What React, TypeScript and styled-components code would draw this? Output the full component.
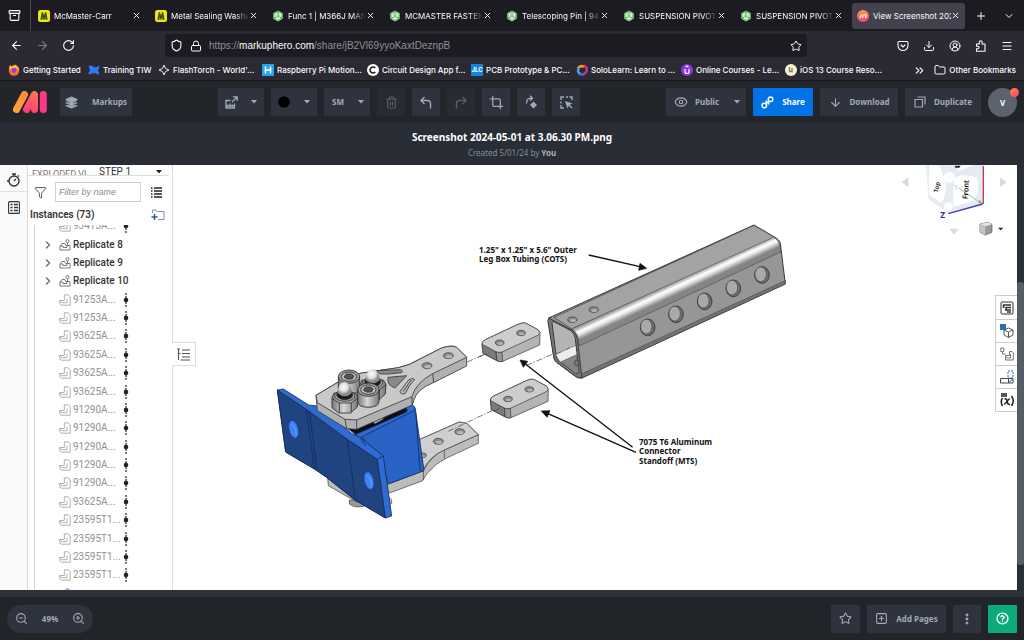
import React from "react";
import styled, { createGlobalStyle, css } from "styled-components";
import {
  ArrowLeft, ArrowRight, ArrowDown, RotateCw, Shield, Lock, Star, CircleUserRound, Menu,
  Folder, ChevronsRight, ChevronRight, ChevronDown, Plus, X, Layers, Trash2, Crop, Eye, ZoomIn, ZoomOut,
  SquarePlus, EllipsisVertical, CircleHelp, Funnel, Archive, Download,
} from "lucide-react";

const Global = createGlobalStyle`
  *, *::before, *::after { box-sizing: border-box; }
  body { margin: 0; background: #22262b; }
  button, input, select { font: inherit; color: inherit; margin: 0; padding: 0; border: 0; background: none; }
  button { cursor: pointer; }
  svg { flex: none; display: block; }
`;

const Page = styled.div`
  display: flex;
  flex-direction: column;
  height: 100vh;
  overflow: hidden;
  font-family: "Noto Sans", sans-serif;
`;

/* ---------- browser chrome ---------- */
const Chrome = styled.header`
  flex: none;
  font-family: Inter, sans-serif;
  color: #fbfbfe;
  background: #2b2a33;
`;
const TabBar = styled.div`
  display: flex;
  align-items: center;
  height: 31px;
  background: #1c1b22;
`;
const RecentButton = styled.button`
  display: grid;
  place-items: center;
  width: 31px;
  height: 31px;
  padding-right: 1px;
  border-right: 1px solid #4a4953;
  margin-right: 2px;
`;
const Tabs = styled.nav`
  display: flex;
  gap: 4px;
`;
const TabLabel = styled.button`
  display: flex;
  align-items: center;
  gap: 4px;
  flex: 1;
  min-width: 0;
  font-size: 8px;
  line-height: 12px;
  white-space: nowrap;
  overflow: hidden;
  text-align: left;
  mask-image: linear-gradient(to right, #000 80px, transparent 94px);
`;
const Tab = styled.div<{ $active?: boolean }>`
  display: flex;
  align-items: center;
  width: 113px;
  height: 26px;
  padding: 0 5px;
  border-radius: 3px;
  background: ${(p) => (p.$active ? "#42414d" : "transparent")};
  ${(p) => p.$active && css`${TabLabel} { mask-image: none; }`}
`;
const TabClose = styled.button`
  display: grid;
  place-items: center;
  width: 9px;
`;
const TabActions = styled.div`
  display: flex;
  justify-content: space-between;
  flex: 1;
  padding: 0 9px 0 10px;
`;
const NavRow = styled.div`
  display: flex;
  align-items: center;
  justify-content: space-between;
  height: 29px;
  padding: 0 11px 0 10px;
`;
const IconGroup = styled.div<{ $gap: number }>`
  display: flex;
  align-items: center;
  gap: ${(p) => p.$gap}px;
`;
const IconButton = styled.button<{ $dim?: boolean }>`
  display: grid;
  place-items: center;
  opacity: ${(p) => (p.$dim ? 0.4 : 1)};
`;
const AddressBar = styled.div`
  display: flex;
  align-items: center;
  gap: 7px;
  width: 64%;
  height: 23px;
  padding: 0 5px;
  border-radius: 3px;
  background: #1c1b22;
`;
const Url = styled.div`
  flex: 1;
  font-family: "Liberation Sans", sans-serif;
  font-size: 10px;
  line-height: 14px;
  color: #8f8e99;
  outline: none;
  b { font-weight: 400; color: #fbfbfe; }
`;
const Bookmarks = styled.nav`
  display: flex;
  align-items: center;
  height: 20px;
  padding: 0 8px;
  gap: 8px;
  font-size: 8px;
  font-weight: 500;
  line-height: 12px;
`;
const Bookmark = styled.a<{ $w?: number }>`
  display: flex;
  align-items: center;
  gap: 3px;
  width: ${(p) => (p.$w ? p.$w + "px" : "auto")};
  color: inherit;
  text-decoration: none;
  white-space: nowrap;
`;
const BookmarkEnd = styled.div`
  display: flex;
  align-items: center;
  gap: 8px;
  margin-left: auto;
`;

/* ---------- markup editor ---------- */
const Toolbar = styled.div`
  flex: none;
  display: flex;
  align-items: center;
  justify-content: space-between;
  height: 43px;
  padding: 0 7px 0 13px;
  border-top: 1px solid #17181d;
  background: #22262b;
  color: #a3a9b5;
`;
const Group = styled.div`
  display: flex;
  align-items: center;
  gap: 7px;
`;
const block = css<{ $w: number; $dim?: boolean }>`
  display: flex;
  align-items: center;
  justify-content: center;
  width: ${(p) => p.$w}px;
  height: 28px;
  border-radius: 1px;
  background: ${(p) => (p.$dim ? "#272b32" : "#2e333e")};
  font-size: 8px;
  font-weight: 700;
  line-height: 14px;
  white-space: nowrap;
`;
const ToolButton = styled.button<{ $w: number; $dim?: boolean; $tone?: "blue" | "green"; $gap?: number }>`
  ${block}
  gap: ${(p) => p.$gap ?? 8}px;
  color: ${(p) => (p.$tone ? "#fff" : p.$dim ? "#59606b" : "#a3a9b5")};
  ${(p) => p.$tone === "blue" && "background: #0073e6;"}
  ${(p) => p.$tone === "green" && "background: #0cab7c;"}
`;
const ToolSelect = styled.label<{ $w: number }>`
  ${block}
  gap: 7px;
  padding: 0 6px 0 8px;
  select { appearance: none; flex: 1; min-width: 0; outline: none; }
`;
const Logo = styled.a`
  margin-right: 6px;
`;
const Avatar = styled.button`
  position: relative;
  width: 29px;
  height: 29px;
  border-radius: 50%;
  background: #5d636c;
  color: #fff;
  font-size: 8px;
  font-weight: 700;
  &::after {
    content: "";
    position: absolute;
    top: 0;
    right: -2px;
    width: 9px;
    height: 9px;
    border-radius: 50%;
    background: linear-gradient(135deg, #ff8a3c, #ff3f7f);
  }
`;
const TitleBar = styled.div`
  flex: none;
  height: 42px;
  padding-top: 5px;
  background: #282d36;
  text-align: center;
`;
const Title = styled.h1`
  margin: 0;
  font-size: 10px;
  font-weight: 700;
  line-height: 18px;
  color: #fff;
`;
const Subtitle = styled.p`
  margin: 0;
  font-size: 8px;
  line-height: 13px;
  color: #858c98;
  b { color: #a9afba; }
`;
const Stage = styled.main`
  flex: 1;
  min-height: 0;
  display: flex;
  border-bottom: 7px solid #2c313c;
  background: #fff;
`;
const ScrollTrack = styled.div`
  width: 7px;
  padding: 117px 0 25px;
  background: #282d36;
`;
const ScrollThumb = styled.div`
  height: 100%;
  border-radius: 3px;
  background: #565d69;
`;
const Footer = styled.footer`
  flex: none;
  display: flex;
  align-items: center;
  justify-content: space-between;
  height: 43px;
  padding: 0 7px;
  background: #21252a;
  color: #a3a9b5;
`;
const ZoomPill = styled.div`
  display: flex;
  align-items: center;
  justify-content: space-between;
  width: 86px;
  height: 28px;
  padding: 0 8px;
  border-radius: 14px;
  background: #2e333e;
  font-size: 8px;
  font-weight: 700;
`;

/* ---------- CAD page ---------- */
const Rail = styled.div`
  flex: none;
  width: 28px;
  background: #fafafa;
  border-right: 1px solid #dcdcdc;
`;
const RailButton = styled.button`
  display: grid;
  place-items: center;
  width: 27px;
  height: 27px;
  padding-top: 3px;
  &:first-child { border-bottom: 1px solid #e2e2e2; }
`;
const Panel = styled.section`
  flex: none;
  display: flex;
  flex-direction: column;
  width: 145px;
  border-right: 1px solid #ddd;
  font-family: Roboto, sans-serif;
  font-size: 10px;
  line-height: 14px;
  color: #333;
`;
const PanelHead = styled.div`
  display: flex;
  align-items: flex-start;
  height: 11px;
  margin-right: 3px;
  padding: 0 7px 0 4px;
  border-bottom: 1px solid #ddd;
  overflow: hidden;
`;
const HeadName = styled.span`
  width: 60px;
  padding-top: 3px;
  font-size: 9px;
  line-height: 12px;
  color: #777;
`;
const StepSelect = styled.label`
  display: flex;
  align-items: center;
  flex: 1;
  padding-left: 7px;
  line-height: 12px;
  select { appearance: none; flex: 1; outline: none; height: 13px; }
`;
const FilterRow = styled.div`
  display: flex;
  align-items: center;
  gap: 8px;
  height: 32px;
  padding: 0 11px 0 6px;
  input {
    width: 86px;
    height: 20px;
    margin-right: 2px;
    padding-left: 3px;
    border: 1px solid #d0d0d0;
    outline: none;
    font: italic 9px/14px "Liberation Sans", sans-serif;
  }
  input::placeholder { color: #8c8c8c; }
`;
const Instances = styled.div`
  display: flex;
  justify-content: space-between;
  align-items: center;
  height: 14px;
  padding: 0 7px 0 2px;
  font-weight: 600;
`;
const TreeClip = styled.div`
  flex: 1;
  min-height: 0;
  display: flex;
  margin: 3px 0 0 6px;
  border-left: 1px solid #d4d4d4;
  overflow: hidden;
`;
const Tree = styled.ul`
  flex: 1;
  display: flex;
  flex-direction: column;
  margin: -8px 0 -13px;
  padding: 0;
  list-style: none;
`;
const TreeRow = styled.li<{ $group?: boolean }>`
  flex: 1;
  display: flex;
  align-items: center;
  padding-left: 7px;
  color: ${(p) => (p.$group ? "#333" : "#929292")};
  font-weight: ${(p) => (p.$group ? 500 : 400)};
`;
const Twist = styled.span`
  width: 17px;
`;
const RowName = styled.span`
  width: 50px;
  margin-left: 2px;
  white-space: nowrap;
`;
const Viewport = styled.section`
  position: relative;
  flex: 1;
  min-width: 0;
  display: flex;
`;
const Drawing = styled.svg`
  flex: 1;
  width: 100%;
  height: 100%;
  font-family: "Noto Sans", sans-serif;
`;
const TreeToggle = styled.button`
  position: absolute;
  left: -1px;
  top: 177px;
  display: grid;
  place-items: center;
  width: 24px;
  height: 24px;
  border: 1px solid #ddd;
  border-left: 0;
  background: #fff;
`;
const SideTools = styled.div`
  position: absolute;
  right: 0;
  top: 130px;
  border: 1px solid #ccc;
  border-right: 0;
  background: #fff;
`;
const SideTool = styled.button`
  display: grid;
  place-items: center;
  width: 21px;
  height: 23px;
  & + & { border-top: 1px solid #ccc; }
`;

const Caret = ({ dark }: { dark?: boolean }) => (
  <svg width="6" height="4" viewBox="0 0 6 4"><path d="M0 0h6L3 3.6z" fill={dark ? "#222" : "#a3a9b5"} /></svg>
);

type FavKind = "mc" | "gem" | "hero";
const Favicon = ({ kind }: { kind: FavKind }) => (
  <svg width="12" height="12" viewBox="0 0 12 12">
    {kind === "mc" && (<><rect width="12" height="12" rx="2.5" fill="#f5e211" /><path d="M2.4 9.8L3.700 2.200H5L6 5.500l1-3.300h1.300L9.600 9.800H7.500L7.200 6.800L6.600 9.800H5.400L4.800 6.800L4.500 9.800z" fill="#2d5a1c" /></>)}
    {kind === "gem" && (<><path d="M6 .4L10.800 3.200v5.600L6 11.600L1.200 8.800V3.200z" fill="#8ccf86" /><circle cx="6" cy="6" r="2.600" fill="none" stroke="#e9f8e6" strokeWidth="1.200" /><path d="M6 1v3M2 8.500l2.200-1.400M10 8.500L7.800 7.100" stroke="#4b9150" strokeWidth="1" /></>)}
    {kind === "hero" && (<><defs><linearGradient id="fh" x2="0" y2="1"><stop stopColor="#ff9a3d" /><stop offset="1" stopColor="#ff3b80" /></linearGradient></defs><circle cx="6" cy="6" r="6" fill="url(#fh)" /><path d="M3 7.500L5 4.500M5.500 7.500L7.200 4.500M8.800 4.500v3" stroke="#fff" strokeWidth="1.300" strokeLinecap="round" /></>)}
  </svg>
);

const tabs: { label: string; kind: FavKind }[] = [
  { label: "McMaster-Carr", kind: "mc" },
  { label: "Metal Sealing Washe", kind: "mc" },
  { label: "Func 1 | M366J MAN", kind: "gem" },
  { label: "MCMASTER FASTEN", kind: "gem" },
  { label: "Telescoping Pin | 94", kind: "gem" },
  { label: "SUSPENSION PIVOT", kind: "gem" },
  { label: "SUSPENSION PIVOT", kind: "gem" },
  { label: "View Screenshot 202", kind: "hero" },
];

const BookmarkIcon = ({ n }: { n: number }) => (
  <svg width="12" height="12" viewBox="0 0 12 12">
    {n === 0 && (<><circle cx="6" cy="6.500" r="5.200" fill="#ff7139" /><path d="M1 5c0-2 .6-3 1.200-4L4 3l3-2.500C10 2 11.500 4 11 7L8 3.500z" fill="#ffbd2e" /><circle cx="6" cy="6.500" r="2.400" fill="#8a3de0" /></>)}
    {n === 1 && <path d="M1 1.500l3 .2c3 2.200 5 2 7.500-.4L11 4.500C9.500 6 9.500 6.300 11 8v3c-3-2.300-6-2.500-10-.3L.5 8.500C2.500 6.500 2.500 6 1 4.500z" fill="#2f7bf0" />}
    {n === 2 && <path d="M6 1L7.500 4.500L11 6L7.500 7.500L6 11L4.500 7.500L1 6L4.500 4.500z" fill="none" stroke="#e8e8dd" strokeWidth="1" />}
    {n === 3 && (<><rect width="12" height="12" fill="#22a7e8" /><path d="M3.500 2.500v7M8.500 2.500v7M2.500 6.500l7-1" stroke="#fff" strokeWidth="1.400" /></>)}
    {n === 4 && (<><circle cx="6" cy="6" r="6" fill="#fff" /><path d="M8.300 4A3 3 0 1 0 8.300 8" fill="none" stroke="#222" strokeWidth="1.600" /></>)}
    {n === 5 && (<><rect width="12" height="12" fill="#1486e0" /><text x="6" y="8" fontSize="6" fontWeight="700" textAnchor="middle" fill="#fff">JLC</text></>)}
    {n === 6 && (<g fill="none" strokeWidth="2.600"><path d="M2 4.500C3 2 6 1.500 8 3" stroke="#f59a23" /><path d="M8 1.500C11 3 11.500 6 10 8" stroke="#d8325b" /><path d="M10 8C8 11 5 11 3.500 9.500" stroke="#7b4fd0" /><path d="M4 10C1.500 8.500 1.500 6 3 4" stroke="#3aa7e0" /></g>)}
    {n === 7 && (<><circle cx="6" cy="6" r="6" fill="#8c34dd" /><path d="M4 5v2.500a2 2 0 0 0 4 0V5M4.500 3L6 2l1.500 1" fill="none" stroke="#fff" strokeWidth="1.200" /></>)}
    {n === 8 && (<><circle cx="6" cy="6" r="6" fill="#f4f1e4" /><path d="M4.500 3v4.500H7V4" fill="none" stroke="#9b8b2a" strokeWidth="1.500" /></>)}
  </svg>
);
const bookmarks: [string, number][] = [
  ["Getting Started", 72], ["Training TIW", 62], ["FlashTorch - World'...", 96],
  ["Raspberry Pi Motion...", 97], ["Circuit Design App f...", 96], ["PCB Prototype & PC...", 97],
  ["SoloLearn: Learn to ...", 97], ["Online Courses - Le...", 96], ["iOS 13 Course Reso...", 96],
];

const PartIcon = () => (
  <svg width="12" height="12" viewBox="0 0 12 12" fill="none" stroke="#a6a6a6" strokeWidth=".9" strokeLinejoin="round"><path d="M5.300 .8H9l2.200 2v8.400H2.500Q.6 10.500.6 8.800V6.500h4.700zM.8 7q1 1.700 2.500 1.700H8V4.500" /></svg>
);
const GroupIcon = () => (
  <svg width="12" height="12" viewBox="0 0 12 12" fill="none" stroke="#6a6a6a" strokeWidth=".9" strokeLinejoin="round"><circle cx="8.500" cy="2.200" r="1.600" /><path d="M8.500 4v2.500M1 7L3 4.500h2.800l1 2H11V11H1zM1 7h3v1.500h4V6.500" /></svg>
);
const MateIcon = () => (
  <svg width="6" height="14" viewBox="0 0 6 14"><path d="M3 0V14" stroke="#222" strokeWidth="1.200" strokeDasharray="2 1" /><circle cx="3" cy="7" r="2.300" fill="#222" /></svg>
);

const parts = ["91253A...", "91253A...", "93625A...", "93625A...", "93625A...", "93625A...", "91290A...", "91290A...", "91290A...", "91290A...", "91290A...", "93625A...", "23595T1...", "23595T1...", "23595T1...", "23595T1..."];

const PartRow = ({ name }: { name: string }) => (
  <TreeRow><Twist /><PartIcon /><RowName>{name}</RowName><MateIcon /></TreeRow>
);
const GroupRow = ({ name }: { name: string }) => (
  <TreeRow $group><Twist><ChevronRight size={12} strokeWidth={2.5} color="#666" /></Twist><GroupIcon /><RowName>{name}</RowName></TreeRow>
);

const Hole = ({ x, y, rx = 15, ry = 9 }: { x: number; y: number; rx?: number; ry?: number }) => (
  <g><ellipse cx={x} cy={y} rx={rx} ry={ry} fill="#8a8a8a" stroke="#333" strokeWidth="2" /><ellipse cx={x + 2} cy={y + 3} rx={rx - 5} ry={ry - 4} fill="#b5b5b5" stroke="none" /></g>
);
const Standoff = ({ x, y }: { x: number; y: number }) => (
  <g transform={`translate(${x} ${y})`} stroke="#333" strokeWidth="2" strokeLinejoin="round">
    <path d="M0 62Q1 54 10 50L108 4Q120-2 130 0L168 20Q175 26 174 36L173 66L62 115Q52 118 45 113L3 91Z" fill="#b4b4b4" />
    <path d="M0 62L42 86L45 113L3 91Z" fill="#7b7b7b" />
    <path d="M42 86Q50 90 60 87L62 115Q52 118 45 113Z" fill="#969696" />
    <path d="M0 62Q1 54 10 50L108 4Q120-2 130 0L168 20Q178 30 170 36L60 87Q50 90 42 86L4 66Z" fill="#cdcdcd" />
    <Hole x={53} y={59} rx={13} ry={8} /><Hole x={117} y={30} rx={13} ry={8} />
  </g>
);
const SocketScrew = ({ x, y }: { x: number; y: number }) => (
  <g stroke="#2e2e2e" strokeWidth="2.500">
    <path d={`M${x - 32} ${y}v36q0 16 32 17q32-1 32-17v-36z`} fill="url(#metal)" />
    <ellipse cx={x} cy={y} rx="32" ry="20" fill="#9a9a9a" />
    <ellipse cx={x} cy={y} rx="23" ry="14" fill="#bdbdbd" />
    <path d={`M${x - 15} ${y + 1}l7-9h15l8 6l-6 9h-16z`} fill="#555" />
  </g>
);
const AcornNut = ({ x, y }: { x: number; y: number }) => (
  <g stroke="#2e2e2e" strokeWidth="2.500">
    <path d={`M${x - 38} ${y + 18}l6-14h64l8 12l-2 30l-20 18h-36l-20-16z`} fill="url(#metal)" />
    <path d={`M${x - 38} ${y + 20}l20 14h38l20-15M${x - 16} ${y + 34}v30M${x + 20} ${y + 34}v28`} fill="none" />
    <ellipse cx={x} cy={y + 12} rx="30" ry="17" fill="#aaa" />
    <ellipse cx={x} cy={y + 9} rx="24" ry="15" fill="#1c1c1c" />
    <path d={`M${x - 21} ${y + 5}q1-33 21-34q20 1 21 34q-20 18-42 0z`} fill="url(#ball)" stroke="none" />
  </g>
);

const Annotation = ({ x, y, lines }: { x: number; y: number; lines: string[] }) => (
  <text x={x} y={y} fontSize="8" fontWeight="700" fill="#111">
    {lines.map((l, i) => <tspan key={l} x={x} y={y + i * 9 + (i > 1 ? 1 : 0)}>{l}</tspan>)}
  </text>
);

const ExplodedView = () => (
  <Drawing viewBox="173 165 844 425" role="img" aria-label="Exploded view">
    <defs>
      <linearGradient id="metal"><stop stopColor="#777" /><stop offset=".45" stopColor="#d6d6d6" /><stop offset="1" stopColor="#777" /></linearGradient>
      <radialGradient id="ball" cx=".42" cy=".35"><stop stopColor="#fff" /><stop offset=".6" stopColor="#dedede" /><stop offset="1" stopColor="#8b8b8b" /></radialGradient>
      <linearGradient id="bend" gradientUnits="userSpaceOnUse" x1="625" y1="213" x2="645" y2="256">
        <stop stopColor="#8a8a8a" /><stop offset=".3" stopColor="#a8a8a8" /><stop offset=".52" stopColor="#fff" /><stop offset=".68" stopColor="#e8e8e8" /><stop offset="1" stopColor="#858585" />
      </linearGradient>
    </defs>

    {/* clamp assembly */}
    <g transform="translate(260 320) scale(.33333)" strokeLinejoin="round">
      <g stroke="#3a3a3a" strokeWidth="2">
        <path d="M268 540v12q18 14 45 6l20-12z" fill="#999" />
        <path d="M385 530l10 10v10l-12 5z" fill="#ccc" />
        <path d="M203 472L205 497L290 546L400 515L488 482L500 462L530 432L560 414L655 370L655 344L620 310L598 306L480 358L440 400L240 440Z" fill="#bcbcbc" />
        <path d="M655 344L553 390Q515 405 490 452L385 492L290 526L203 474" fill="none" />
        <path d="M553 390v26M490 452v28M290 526v20" fill="none" />
        <path d="M480 358L598 306L620 310L655 344L553 390Q510 408 488 452L470 450Z" fill="#cfcfcf" />
        <Hole x={535} y={364} /><Hole x={599} y={335} /><Hole x={488} y={406} rx={11} ry={7} />
      </g>
      <g stroke="#122a5c" strokeWidth="2.500">
        <path d="M290 345L440 270Q466 255 466 268L492 452L385 492L360 410Z" fill="#2a63c6" />
        <path d="M262 325L440 262L440 276L290 345Z" fill="#0b0e14" />
        <path d="M276 348L440 276Q446 268 436 262L456 254Q470 262 462 272L302 352Q330 362 300 372Z" fill="#2f6bd0" />
        <path d="M52 210L70 207L146 255L170 258L275 340L300 352L370 408L395 588L376 594L285 540L200 472L165 448L77 396Z" fill="#2f6bd0" />
        <path d="M52 210L130 262L150 276L262 358L352 418L376 594L285 540L200 472L165 448L77 396Z" fill="#1f447f" />
        <path d="M139 268L163 447M149 275L171 450M262 358L286 540M352 418L370 408M302 358L318 378M467 275L480 452" fill="none" />
      </g>
      <g stroke="#1b3c85" strokeWidth="2">
        <ellipse cx="101" cy="328" rx="14" ry="27" transform="rotate(-14 101 328)" fill="#3d82f2" />
        <ellipse cx="327" cy="482" rx="14" ry="27" transform="rotate(-14 327 482)" fill="#3d82f2" />
        <path d="M92 312q18 8 16 34M318 466q18 8 16 34" fill="none" stroke="#6aa0fa" strokeWidth="3" />
      </g>
      <path d="M336 300l34-16v14l-26 14z" fill="#aaa89d" stroke="#333" />
      <g stroke="#3a3a3a" strokeWidth="2.500">
        <path d="M168 226L235 186L300 160L415 143Q450 136 480 117L545 84Q575 74 590 82L620 112L620 138L520 188Q470 208 462 240L457 255L290 328L260 326L172 272Z" fill="#b1b1b1" />
        <path d="M168 226L235 186L300 160L415 143Q450 136 480 117L545 84Q575 74 590 82L620 112L518 161Q466 190 456 230L290 300L255 298L172 248Z" fill="#c9c9c9" />
        <path d="M255 298l5 28M290 300v28M518 161l3 27M456 230v24" fill="none" />
        <path d="M350 152L420 149Q432 152 425 158L385 162L360 162ZM384 172L440 167L405 204Q380 196 384 172Z" fill="#8a8a8a" />
        <path d="M420 214L446 180Q456 172 464 178L448 198L436 220Q422 226 420 214Z" fill="#b5b5b5" />
        <path d="M430 214l24-34" fill="none" />
        <Hole x={501} y={137} /><Hole x={565} y={107} />
      </g>
      <SocketScrew x={267} y={170} />
      <AcornNut x={338} y={176} />
      <AcornNut x={254} y={215} />
      <SocketScrew x={325} y={209} />
      <path d="M303 256q25 12 50-3" stroke="#a65a52" strokeWidth="2" fill="none" />
      <path d="M622 126L690 96M565 334L700 270" stroke="#333" strokeWidth="2" strokeDasharray="18 5 4 5" />
    </g>

    {/* tubing, standoffs and pointers */}
    <g transform="translate(460 210) scale(.33333)" strokeLinejoin="round">
      <Standoff x={66} y={339} />
      <Standoff x={91} y={508} />
      <path d="M56 441L88 428M102 603L118 596M200 466L345 404" stroke="#333" strokeWidth="2" strokeDasharray="18 5 4 5" fill="none" />
      <g stroke="#3a3a3a" strokeWidth="3">
        <path d="M266 324L882 45L948 84Q962 92 962 108L976 222L366 504Q352 505 345 498L290 457Q282 450 281 440Z" fill="#969696" />
        <path d="M282 322L882 46L948 84L335 357Z" fill="#a3a3a3" strokeWidth="2" />
        <path d="M335 357L940 82Q960 88 962 126L357 408Q358 368 335 357Z" fill="url(#bend)" strokeWidth="1.500" />
        <path d="M364 492L976 212L976 222L366 504Z" fill="#727272" strokeWidth="1.500" />
        <path d="M266 324L335 360Q350 370 352 386L366 504Q352 505 345 498L290 457Q282 450 281 440L264 336Q262 324 274 322Z" fill="#777" />
        <path d="M276 338Q276 332 284 336L333 362Q344 370 346 386L357 488Q355 494 346 488L296 452Q290 446 288 434Z" fill="#b4b4b4" />
        <path d="M288 434L346 408L350 436L302 457Z" fill="#ededed" stroke="none" />
        <path d="M302 456L350 434L357 488L346 490Z" fill="#858585" strokeWidth="1.500" />
        <path d="M289 432L346 406" strokeDasharray="16 5 4 5" strokeWidth="2" />
        <ellipse cx="350" cy="459" rx="7" ry="8" fill="#777" strokeWidth="2" />
      </g>
      <Hole x={337} y={329} rx={14} ry={8} /><Hole x={401} y={299} rx={14} ry={8} />
      {[[563, 352], [648, 313], [734, 274], [820, 235], [906, 195]].map(([x, y]) => (
        <g key={x} stroke="#333" strokeWidth="2.500">
          <ellipse cx={x} cy={y} rx="22" ry="25" fill="#6f6f6f" />
          <ellipse cx={x - 4} cy={y - 2} rx="17" ry="22" fill="#a9a9a9" strokeWidth="1.500" />
        </g>
      ))}
      <g stroke="#111" strokeWidth="4" fill="#111">
        <path d="M386 135L540 170M518 712L196 462M528 727L262 610" />
        <path d="M560 175L536 181L540 160ZM180 450L203 454L190 472ZM244 603L270 602L261 622Z" strokeWidth="2" />
      </g>
    </g>
    <Annotation x={479} y={253} lines={['1.25" x 1.25" x 5.6" Outer', "Leg Box Tubing (COTS)"]} />
    <Annotation x={639} y={445} lines={["7075 T6 Aluminum", "Connector", "Standoff (MTS)"]} />

    {/* view cube */}
    <g transform="translate(820 160) scale(.33333)">
      <path d="M318 15L490 15L490 132L385 158L326 118Z" fill="#e6eaf2" />
      <path d="M328 15Q325 60 328 104L362 128Q376 126 377 70L360 18ZM405 52Q398 80 400 140L462 122Q474 112 475 66L470 52Q440 40 405 52ZM400 15h60l-40 18z" fill="#fff" />
      <circle cx="388" cy="52" r="17" fill="#fff" /><circle cx="385" cy="140" r="13" fill="#fff" />
      <path d="M416 84L486 131" stroke="#8fcc98" strokeWidth="3" /><path d="M474 127l14 5l-8-12z" fill="#6cb578" />
      <text x="403" y="90" fontSize="20" fill="#a8d8ad">Y</text>
      <path d="M490 18V132" stroke="#c9384a" strokeWidth="4" />
      <path d="M488 132L385 161" stroke="#4438b8" strokeWidth="4" />
      <text x="361" y="175" fontSize="25" fontWeight="700" fill="#3527b8">Z</text>
      <text transform="translate(443 118) rotate(-86)" fontSize="22" fontWeight="600" fill="#111">Front</text>
      <text transform="translate(354 98) rotate(-80)" fontSize="18" fontWeight="600" fill="#111">Top</text>
      <path d="M404 17h18l-4 6h-12z" fill="#222" />
      <path d="M245 67l20-15v30zM560 67l-20-15v30zM389 206h27l-14 18z" fill="#d9dbdd" />
      <path d="M480 192L504 187L516 193V217L496 225L480 217Z" fill="#9a9a9a" stroke="#555" strokeWidth="2" />
      <path d="M480 192L504 187L516 193L496 199Z" fill="#e6e6e6" /><path d="M480 192L496 199V225L480 217Z" fill="#c4c4c4" />
      <path d="M534 203h16l-8 8z" fill="#222" />
    </g>
  </Drawing>
);

const sideIcons = [
  <g key="a"><rect x="1" y="1" width="12" height="12" rx="1" fill="none" stroke="#333" /><path d="M3 4h8M5.500 6.500h5.500M5.500 9h5.500M7 11h4M3.500 4v3M6 6v4" stroke="#333" strokeWidth="1.600" /></g>,
  <g key="b"><path d="M8.500 4l4.500 2v5l-4.500 2.500L4 11V6zM4 6l4.500 2L13 6M8.500 8v5.500" fill="none" stroke="#555" /><rect x="0" y="0" width="6" height="6" fill="#2a6fb5" /></g>,
  <g key="c" fill="none" stroke="#777"><path d="M.8 1h3v3.500h-3zM2.500 4.500V7h3M9.500 4.500H12l1.300 1.300V13H5.500V8.500h4zM5.500 9q1 2 2.500 2h2.500V7" /></g>,
  <g key="d" fill="none"><path d="M.5 8.500h8v4.500h-8zM8.500 8.500h4.500v4.500H8.500M9 12.500l3.500-3.500" stroke="#444" /><path d="M8 1h5v7H8z" stroke="#2a6fb5" strokeDasharray="2 1" /></g>,
  <g key="e" fill="none" stroke="#222" strokeWidth="1.500"><path d="M2.500 5Q0 9 2.500 13M11.500 3Q15 8 11.500 13M4.500 6q2-1 2.700 2.500T10 11.500M10 6q-1-.5-3 2.500t-3 2.500" /><path d="M1 1h6M1 3h6" /></g>,
];

export default function App() {
  return (
    <Page>
      <Global />
      <Chrome>
        <TabBar>
          <RecentButton aria-label="Recent tabs"><Archive size={13} strokeWidth={2} /></RecentButton>
          <Tabs>
            {tabs.map((t, i) => (
              <Tab key={i} $active={i === 7}>
                <TabLabel><Favicon kind={t.kind} />{t.label}</TabLabel>
                <TabClose aria-label="Close tab"><X size={9} strokeWidth={2.5} /></TabClose>
              </Tab>
            ))}
          </Tabs>
          <TabActions>
            <IconButton aria-label="New tab"><Plus size={12} /></IconButton>
            <IconButton aria-label="List tabs"><ChevronDown size={12} /></IconButton>
          </TabActions>
        </TabBar>
        <NavRow>
          <IconGroup $gap={13}>
            <IconButton aria-label="Back"><ArrowLeft size={13} /></IconButton>
            <IconButton aria-label="Forward" $dim><ArrowRight size={13} /></IconButton>
            <IconButton aria-label="Reload"><RotateCw size={13} /></IconButton>
          </IconGroup>
          <AddressBar>
            <Shield size={13} /><Lock size={12} />
            <Url role="textbox" aria-label="Address" contentEditable suppressContentEditableWarning spellCheck={false}>https://<b>markuphero.com</b>/share/jB2Vl69yyoKaxtDeznpB</Url>
            <IconButton aria-label="Bookmark"><Star size={12} /></IconButton>
          </AddressBar>
          <IconGroup $gap={14}>
            <IconButton aria-label="Pocket"><svg width="12" height="12" viewBox="0 0 12 12" fill="none" stroke="#fbfbfe" strokeWidth="1.100" strokeLinecap="round"><path d="M1 2.500q0-1 1-1h8q1 0 1 1V5.500a5 5 0 0 1-10 0zM4 5l2 2l2-2" /></svg></IconButton>
            <IconButton aria-label="Downloads"><Download size={12} /></IconButton>
            <IconButton aria-label="Account"><CircleUserRound size={12} /></IconButton>
            <IconButton aria-label="Extensions"><svg width="12" height="12" viewBox="0 0 12 12" fill="none" stroke="#fbfbfe" strokeWidth="1.100" strokeLinejoin="round"><path d="M1.500 4h2.800V2.200a1.400 1.400 0 0 1 2.800 0V4H10v7.200H1.500V8.800h1.300a1.200 1.200 0 0 0 0-2.500H1.500z" /></svg></IconButton>
            <IconButton aria-label="Menu"><Menu size={12} /></IconButton>
          </IconGroup>
        </NavRow>
        <Bookmarks>
          {bookmarks.map(([label, w], i) => (
            <Bookmark key={label} href="#" $w={w}><BookmarkIcon n={i} />{label}</Bookmark>
          ))}
          <BookmarkEnd>
            <ChevronsRight size={13} />
            <Bookmark href="#"><Folder size={12} />Other Bookmarks</Bookmark>
          </BookmarkEnd>
        </Bookmarks>
      </Chrome>

      <Toolbar>
        <Group>
          <Logo href="#" aria-label="Markup Hero">
            <svg width="34" height="22" viewBox="0 0 34 22" fill="none" strokeWidth="7" strokeLinecap="round">
              <defs>
                <linearGradient id="l1" gradientUnits="userSpaceOnUse" x1="14" y1="0" x2="0" y2="22"><stop stopColor="#ff8a3d" /><stop offset="1" stopColor="#ffa63f" /></linearGradient>
                <linearGradient id="l2" gradientUnits="userSpaceOnUse" x1="24" y1="0" x2="12" y2="22"><stop stopColor="#ff7a4a" /><stop offset="1" stopColor="#ff3784" /></linearGradient>
              </defs>
              <path d="M3.500 18.500L11.500 3.500" stroke="url(#l1)" />
              <path d="M13.500 18.500L21.500 3.500V18.500" stroke="url(#l2)" strokeLinejoin="round" />
              <path d="M30.300 3.500V18.500" stroke="#ff3784" />
            </svg>
          </Logo>
          <ToolButton $w={72} $gap={14}><Layers size={13} fill="#a3a9b5" />Markups</ToolButton>
        </Group>
        <Group>
          <ToolButton $w={46} $gap={13} aria-label="Insert">
            <svg width="13" height="13" viewBox="0 0 13 13" fill="none" stroke="#a3a9b5" strokeWidth="1.300"><path d="M8 .8h4.200V5M12 1L7 6M5.500 4.500H1v7.500h8.500V7.500M3 10V8.500M5.200 10V7.500M7.400 10V8.500M1 10h8.500" /></svg>
            <Caret />
          </ToolButton>
          <ToolButton $w={46} $gap={14} aria-label="Colour">
            <svg width="12" height="12"><circle cx="6" cy="6" r="5.800" fill="#000" /></svg><Caret />
          </ToolButton>
          <ToolSelect $w={46}><select aria-label="Size"><option>SM</option></select><Caret /></ToolSelect>
          <ToolButton $w={28} $dim aria-label="Delete"><Trash2 size={13} /></ToolButton>
          <ToolButton $w={28} aria-label="Undo"><svg width="12" height="13" viewBox="0 0 12 13" fill="none" stroke="currentColor" strokeWidth="1.400"><path d="M4.500 1L1 4.500L4.500 8M1 4.500H7.500q3 0 3 3V12.500" /></svg></ToolButton>
          <ToolButton $w={28} $dim aria-label="Redo"><svg width="12" height="13" viewBox="0 0 12 13" fill="none" stroke="currentColor" strokeWidth="1.400"><path d="M7.500 1L11 4.500L7.500 8M11 4.500H4.500q-3 0-3 3V12.500" /></svg></ToolButton>
          <ToolButton $w={28} aria-label="Crop"><Crop size={15} /></ToolButton>
          <ToolButton $w={28} aria-label="Rotate"><svg width="13" height="14" viewBox="0 0 13 14" fill="none" stroke="currentColor" strokeWidth="1.300"><path d="M5 .8L7.500 3.300L5 5.800M7.500 3.300H5Q1.500 3.500 1.500 8.500" /><path d="M8.500 6.500L12 10L8.500 13.500L5 10z" fill="currentColor" stroke="none" /></svg></ToolButton>
          <ToolButton $w={28} aria-label="Select"><svg width="13" height="13" viewBox="0 0 13 13" fill="none" stroke="currentColor" strokeWidth="1.400"><path d="M1 4V1H4M6 1h2M9.500 1H12V4M1 5.500v2M1 9v3H4" /><path d="M5 5L12.500 7.500L9.700 8.700L12.500 11.500L11.500 12.500L8.700 9.700L7.500 12.500z" fill="currentColor" stroke="none" /></svg></ToolButton>
        </Group>
        <Group>
          <ToolSelect $w={80}><Eye size={14} /><select aria-label="Visibility"><option>Public</option></select><Caret /></ToolSelect>
          <ToolButton $w={60} $tone="blue"><svg width="13" height="13" viewBox="0 0 13 13" fill="none" stroke="#fff" strokeWidth="1.500"><circle cx="3.300" cy="9.500" r="2.300" /><circle cx="9.500" cy="3.300" r="2.300" /><path d="M5.500 4.500q-1 2 1 3M7.500 8.500q1-2-1-3" /></svg>Share</ToolButton>
          <ToolButton $w={78}><ArrowDown size={13} />Download</ToolButton>
          <ToolButton $w={76}><svg width="12" height="12" viewBox="0 0 12 12" fill="none" stroke="currentColor" strokeWidth="1.200"><path d="M1 3.500h7.500V11H1zM3.500 1H11v7.500" /></svg>Duplicate</ToolButton>
          <Avatar aria-label="Account">V</Avatar>
        </Group>
      </Toolbar>

      <TitleBar>
        <Title>Screenshot 2024-05-01 at 3.06.30 PM.png</Title>
        <Subtitle>Created 5/01/24 by <b>You</b></Subtitle>
      </TitleBar>

      <Stage>
        <Rail>
          <RailButton aria-label="History"><svg width="13" height="14" viewBox="0 0 13 14" fill="none" stroke="#333" strokeWidth="1.400"><circle cx="7" cy="8" r="5" /><path d="M7 2.500V1M5 1h4M7 8l2-2M0 8h2M11 2.500l1 1" /></svg></RailButton>
          <RailButton aria-label="Checks"><svg width="12" height="13" viewBox="0 0 12 13" fill="none" stroke="#333" strokeWidth="1.100"><rect x=".6" y=".6" width="10.800" height="11.800" rx="1" /><path d="M2.500 3.500h2M2.500 6.500h2M2.500 9.500h2M6 3.500h4M6 6.500h4M6 9.500h4" strokeWidth="1.500" /></svg></RailButton>
        </Rail>
        <Panel>
          <PanelHead>
            <HeadName>EXPLODED VI</HeadName>
            <StepSelect><select aria-label="Step"><option>STEP 1</option></select><Caret dark /></StepSelect>
          </PanelHead>
          <FilterRow>
            <Funnel size={13} strokeWidth={1.5} />
            <input placeholder="Filter by name" aria-label="Filter by name" />
            <svg width="11" height="11" viewBox="0 0 11 11" stroke="#222" strokeWidth="1.400"><path d="M0 1h1.500M3 1h8M0 4h1.500M3 4h8M0 7h1.500M3 7h8M0 10h1.500M3 10h8" /></svg>
          </FilterRow>
          <Instances>
            Instances (73)
            <svg width="14" height="12" viewBox="0 0 14 12" fill="none"><path d="M1.500 4V1H5L6.500 2.500H13V10.500H7" stroke="#7b93b0" /><path d="M3.500 5v6M.5 8h6" stroke="#1f5fa8" strokeWidth="1.500" /></svg>
          </Instances>
          <TreeClip>
            <Tree>
              <PartRow name="93413A..." />
              {["Replicate 8", "Replicate 9", "Replicate 10"].map((n) => <GroupRow key={n} name={n} />)}
              {parts.map((n, i) => <PartRow key={i} name={n} />)}
              <TreeRow $group><Twist /><GroupIcon /></TreeRow>
            </Tree>
          </TreeClip>
        </Panel>
        <Viewport>
          <ExplodedView />
          <TreeToggle aria-label="Toggle list"><svg width="13" height="13" viewBox="0 0 13 13" fill="none" stroke="#555" strokeWidth="1.100"><path d="M0 1h3M1.500 1v11M3.500 12H13M5 2h8M5 5.500h8M5 9h8M1.500 5.500h2" /></svg></TreeToggle>
          <SideTools>
            {sideIcons.map((icon, i) => (
              <SideTool key={i} aria-label={`Panel ${i + 1}`}><svg width="14" height="14" viewBox="0 0 14 14">{icon}</svg></SideTool>
            ))}
          </SideTools>
        </Viewport>
        <ScrollTrack><ScrollThumb /></ScrollTrack>
      </Stage>

      <Footer>
        <ZoomPill>
          <IconButton aria-label="Zoom out"><ZoomOut size={13} /></IconButton>
          49%
          <IconButton aria-label="Zoom in"><ZoomIn size={13} /></IconButton>
        </ZoomPill>
        <Group>
          <ToolButton $w={29} aria-label="Favourite"><Star size={13} /></ToolButton>
          <ToolButton $w={79}><SquarePlus size={13} />Add Pages</ToolButton>
          <ToolButton $w={28} aria-label="More"><EllipsisVertical size={14} strokeWidth={3} /></ToolButton>
          <ToolButton $w={29} $tone="green" aria-label="Help"><CircleHelp size={13} strokeWidth={2.5} /></ToolButton>
        </Group>
      </Footer>
    </Page>
  );
}
